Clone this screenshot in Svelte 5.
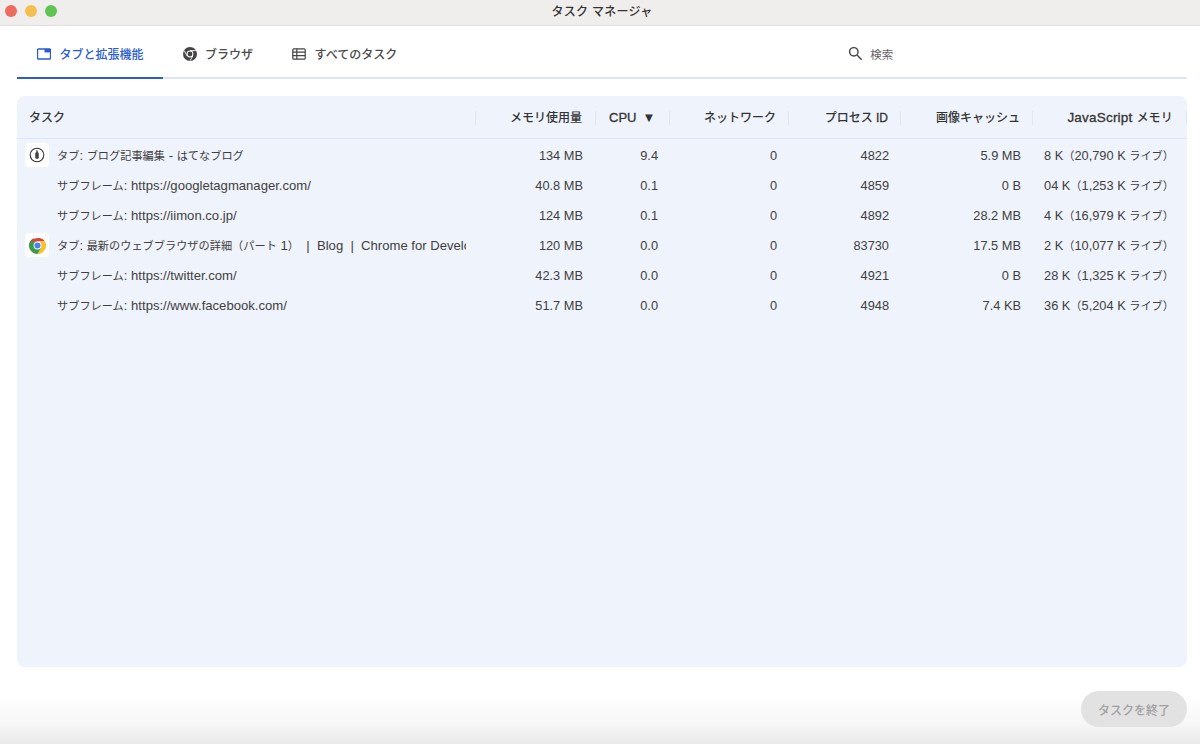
<script lang="ts">
  const rows = [
    { icon: 'hatena', task: 'タブ: ブログ記事編集 - はてなブログ', mem: '134 MB', cpu: '9.4', net: '0', pid: '4822', img: '5.9 MB', js: '8 K（20,790 K ライブ）' },
    { icon: '', task: 'サブフレーム: https://googletagmanager.com/', mem: '40.8 MB', cpu: '0.1', net: '0', pid: '4859', img: '0 B', js: '04 K（1,253 K ライブ）' },
    { icon: '', task: 'サブフレーム: https://iimon.co.jp/', mem: '124 MB', cpu: '0.1', net: '0', pid: '4892', img: '28.2 MB', js: '4 K（16,979 K ライブ）' },
    { icon: 'chrome', task: 'タブ: 最新のウェブブラウザの詳細（パート 1）  |  Blog  |  Chrome for Developers', mem: '120 MB', cpu: '0.0', net: '0', pid: '83730', img: '17.5 MB', js: '52 K（10,077 K ライブ）' },
    { icon: '', task: 'サブフレーム: https://twitter.com/', mem: '42.3 MB', cpu: '0.0', net: '0', pid: '4921', img: '0 B', js: '28 K（1,325 K ライブ）' },
    { icon: '', task: 'サブフレーム: https://www.facebook.com/', mem: '51.7 MB', cpu: '0.0', net: '0', pid: '4948', img: '7.4 KB', js: '36 K（5,204 K ライブ）' }
  ];

  // Japanese runs are set a little smaller than latin ones
  const runs = (s: string) => s.match(/[^\x00-\x7f]+|[\x00-\x7f]+/g) ?? [];
  const isJa = (s: string) => s.charCodeAt(0) > 127;
</script>

{#snippet mixed(text)}
  {#each runs(text) as part}<span class:ja={isJa(part)}>{part}</span>{/each}
{/snippet}

<div class="window">
  <header class="titlebar">
    <div class="lights">
      <span class="light red"></span>
      <span class="light yellow"></span>
      <span class="light green"></span>
    </div>
    <div class="title">タスク マネージャ</div>
  </header>

  <nav class="tabs">
    <div class="tab active">
      <svg width="14" height="12" viewBox="0 0 14 12">
        <path d="M1.5 1h11a1 1 0 0 1 1 1v8a1 1 0 0 1-1 1h-11a1 1 0 0 1-1-1V2a1 1 0 0 1 1-1z" fill="none" stroke="currentColor" stroke-width="1.4" />
        <rect x="7.5" y="1" width="6" height="3.4" fill="currentColor" />
      </svg>
      <span>タブと拡張機能</span>
    </div>
    <div class="tab">
      <svg width="14" height="14" viewBox="0 0 14 14">
        <circle cx="7" cy="7" r="7" fill="#444" />
        <circle cx="7" cy="7" r="3.4" fill="#fff" />
        <circle cx="7" cy="7" r="2.4" fill="#444" />
        <path d="M7 3.6h6M4 8.8 1.2 3.6M9.9 8.8 7 13.8" stroke="#fff" stroke-width="0.9" fill="none" />
      </svg>
      <span>ブラウザ</span>
    </div>
    <div class="tab">
      <svg width="14" height="12" viewBox="0 0 14 12" fill="none" stroke="#444" stroke-width="1.2">
        <rect x="0.8" y="0.8" width="12.4" height="10.4" rx="1" />
        <path d="M0.8 4.2h12.4M0.8 7.6h12.4M4.8 0.8v10.4" />
      </svg>
      <span>すべてのタスク</span>
    </div>
    <div class="search">
      <svg width="15" height="15" viewBox="0 0 16 16" fill="none" stroke="#444" stroke-width="1.5">
        <circle cx="6.2" cy="6.2" r="4.5" />
        <path d="M9.6 9.6 14.6 14.6" />
      </svg>
      <span>検索</span>
    </div>
  </nav>

  <main class="card">
    <div class="row head">
      <div class="cell task">タスク</div>
      <div class="cell">メモリ使用量</div>
      <div class="cell cpu-head"><span class="en">CPU</span><span class="arrow">▼</span></div>
      <div class="cell">ネットワーク</div>
      <div class="cell">{@render mixed('プロセス ID')}</div>
      <div class="cell">画像キャッシュ</div>
      <div class="cell js-head">{@render mixed('JavaScript メモリ')}</div>
    </div>
    {#each rows as r}
      <div class="row">
        <div class="cell task">
          <span class="favicon" class:blank={!r.icon}>
            {#if r.icon === 'hatena'}
              <svg width="16" height="16" viewBox="0 0 16 16">
                <circle cx="8" cy="8" r="6.8" fill="none" stroke="#333" stroke-width="1.1" />
                <path d="M7.3 3.2h1.4v1.9c.8.5 1.1 1.2 1.1 2v3.4c0 .9-.7 1.4-1.8 1.4s-1.8-.5-1.8-1.4V7.1c0-.8.3-1.5 1.1-2z" fill="#444" />
              </svg>
            {:else if r.icon === 'chrome'}
              <svg width="17" height="17" viewBox="0 0 48 48">
                <path d="M24 24 13.6 6A24 24 0 0 1 44.8 12H24z" fill="#db4437" />
                <path d="M24 12h20.8A24 24 0 0 1 24 48l10.4-18z" fill="#fbc02d" />
                <path d="M34.4 30 24 48A24 24 0 0 1 3.2 12 24 24 0 0 1 13.6 6L24 24z" fill="#3c9a4a" />
                <path d="M3.2 12A24 24 0 0 1 13.6 3.2L24 12z" fill="#db4437" />
                <circle cx="24" cy="24" r="11" fill="#fff" />
                <circle cx="24" cy="24" r="8.6" fill="#4285f4" />
              </svg>
            {/if}
          </span>
          <span class="task-text">{@render mixed(r.task)}</span>
        </div>
        <div class="cell">{r.mem}</div>
        <div class="cell">{r.cpu}</div>
        <div class="cell">{r.net}</div>
        <div class="cell">{r.pid}</div>
        <div class="cell">{r.img}</div>
        <div class="cell js"><span>{@render mixed(r.js)}</span></div>
      </div>
    {/each}
  </main>

  <footer class="footer">
    <button class="end" disabled>タスクを終了</button>
  </footer>
</div>

<style>
  :global(body) {
    margin: 0;
    background: #fff;
  }
  .window {
    height: 744px;
    display: flex;
    flex-direction: column;
    font-family: "Liberation Sans", "Noto Sans CJK JP", sans-serif;
    color: #3f3f3f;
    font-size: 12.8px;
    overflow: hidden;
    background: linear-gradient(to bottom, #fff 0, #fff 695px, #f6f6f6 725px, #e9e9e9 744px);
  }
  .ja {
    font-size: 11.2px;
    line-height: 1;
  }
  .titlebar {
    height: 25px;
    flex: none;
    background: #f0eeec;
    border-bottom: 1px solid #e2e0de;
    display: flex;
    align-items: center;
    justify-content: center;
    position: relative;
  }
  .lights {
    position: absolute;
    left: 5px;
    top: 5px;
    display: flex;
    gap: 8px;
  }
  .light {
    width: 12px;
    height: 12px;
    border-radius: 50%;
  }
  .red { background: #ef6a5f; }
  .yellow { background: #f5bf4f; }
  .green { background: #61c554; }
  .title {
    font-size: 12px;
    font-weight: 500;
    color: #333;
    letter-spacing: 0.3px;
    margin-top: -5px;
    padding-left: 4px;
  }
  .tabs {
    height: 51px;
    flex: none;
    margin: 0 13px 0 17px;
    display: flex;
    align-items: stretch;
    border-bottom: 2px solid #dbe6fb;
  }
  .tab {
    display: flex;
    align-items: center;
    gap: 8.5px;
    padding: 4px 19px 0 20px;
    margin-bottom: -2px;
    border-bottom: 2px solid transparent;
    font-size: 12px;
    font-weight: 500;
    color: #4a4a4a;
  }
  .tab.active {
    color: #2a5bd0;
    border-bottom-color: #2a5bd0;
  }
  .search {
    display: flex;
    align-items: center;
    gap: 7px;
    margin-left: 432px;
    padding-top: 4px;
    font-size: 11.5px;
    color: #666;
  }
  .card {
    margin: 17px 13px 0 17px;
    height: 571px;
    flex: none;
    background: #eff3fb;
    border-radius: 8px;
    overflow: hidden;
  }
  .row {
    display: grid;
    grid-template-columns: 459px 120px 74px 119px 112px 132px 154px;
    height: 30px;
    align-items: center;
  }
  .head {
    height: 43px;
    box-sizing: border-box;
    padding-top: 2px;
    border-bottom: 1px solid #dbe6fb;
    margin-bottom: 1px;
    font-weight: 500;
    color: #333;
  }
  .head .ja, .head .cell {
    line-height: 14px;
  }
  .head .cell:not(.js-head):not(.cpu-head) {
    font-size: 12px;
  }
  .head .ja {
    font-size: 12px;
  }
  .head span:not(.ja):not(.arrow) {
    -webkit-text-stroke: 0.3px currentColor;
  }
  .en {
    font-size: 13px;
  }
  .cell {
    text-align: right;
    padding-right: 12px;
    white-space: nowrap;
  }
  .row > .cell:nth-child(2) {
    padding-right: 13px;
  }
  .head .cell {
    border-right: 1px solid #dfe7f6;
  }
  .head .task {
    text-align: left;
    padding-left: 12px;
    padding-right: 0;
  }
  .cpu-head {
    text-align: left;
    padding-left: 13px;
    padding-right: 0;
  }
  .arrow {
    font-size: 13px;
    margin-left: 6px;
  }
  .head .js-head {
    padding-right: 13px;
    font-size: 13.5px;
    letter-spacing: 0.2px;
  }
  .row:not(.head) .task {
    display: flex;
    align-items: center;
    gap: 8px;
    padding-left: 8px;
    padding-right: 10px;
    text-align: left;
  }
  .favicon {
    width: 24px;
    height: 24px;
    flex: none;
    background: #fff;
    border-radius: 4px;
    display: flex;
    align-items: center;
    justify-content: center;
  }
  .favicon.blank {
    background: none;
  }
  .task-text {
    overflow: hidden;
    white-space: pre;
    line-height: 16px;
    padding-top: 2px;
    font-size: 13.1px;
  }
  .js {
    display: flex;
    justify-content: flex-end;
    overflow: hidden;
    margin-left: 11px;
    padding-right: 13px;
    line-height: 16px;
    padding-top: 2px;
  }
  .js span {
    flex: none;
  }
  .footer {
    flex: 1;
    display: flex;
    justify-content: flex-end;
    align-items: flex-start;
    padding: 24px 13px 0 0;
  }
  .end {
    width: 106px;
    height: 36px;
    border: none;
    border-radius: 18px;
    background: #e2e2e2;
    color: #a0a0a0;
    font: inherit;
    font-size: 12px;
    font-weight: 500;
    padding: 0;
  }
</style>
